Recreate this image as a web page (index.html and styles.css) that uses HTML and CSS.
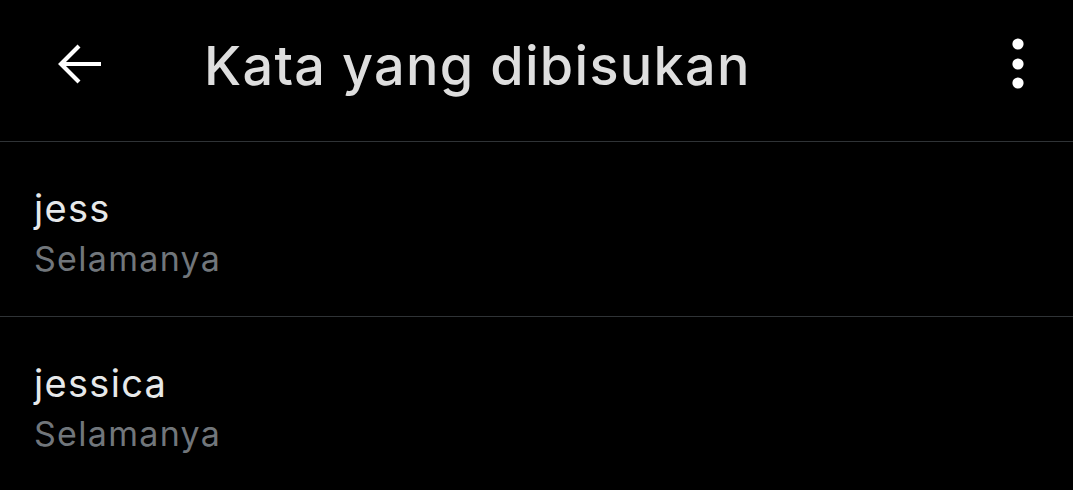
FILE: index.html
```html
<!DOCTYPE html>
<html lang="id">
<head>
    <meta charset="UTF-8">
    <meta name="viewport" content="width=device-width, initial-scale=1.0">
    <title>Kata yang dibisukan</title>
    <link rel="stylesheet" href="styles.css">
</head>
<body>

<header class="top-bar">
    <button class="icon-btn back-btn" aria-label="Kembali">
        <svg width="50" height="50" viewBox="0 0 50 50">
            <path d="M47 25H9M25 7L7 25l18 18" fill="none" stroke="#fff" stroke-width="4.2"/>
        </svg>
    </button>
    <h1 class="title">Kata yang dibisukan</h1>
    <button class="icon-btn more-btn" aria-label="Lainnya">
        <svg width="14" height="54" viewBox="0 0 14 54">
            <circle cx="7" cy="7" r="5.6" fill="#fff"/>
            <circle cx="7" cy="27" r="5.6" fill="#fff"/>
            <circle cx="7" cy="46" r="5.6" fill="#fff"/>
        </svg>
    </button>
</header>

<ul class="muted-list">
    <li class="muted-item">
        <span class="word">jess</span>
        <span class="duration">Selamanya</span>
    </li>
    <li class="muted-item">
        <span class="word">jessica</span>
        <span class="duration">Selamanya</span>
    </li>
</ul>

</body>
</html>
```

FILE: styles.css
```css
body {
    margin: 0;
    background: #000;
    color: #e7e9ea;
    font-family: Inter, "Noto Sans", Arial, sans-serif;
    overflow: hidden;
}

.top-bar {
    display: flex;
    align-items: center;
    height: 141px;
    border-bottom: 1px solid #2f3336;
}

.icon-btn {
    background: none;
    border: none;
    padding: 0;
    display: flex;
    align-items: center;
    justify-content: center;
}

.back-btn {
    margin-left: 54px;
    margin-top: -14px;
}

.title {
    flex: 1;
    margin: -10px 0 0 100px;
    font-size: 54px;
    font-weight: 500;
    letter-spacing: 1.3px;
    color: #dedede;
}

.more-btn {
    margin-right: 48px;
    margin-top: -14px;
}

.muted-list {
    list-style: none;
    margin: 0;
    padding: 0;
}

.muted-item {
    display: flex;
    flex-direction: column;
    justify-content: center;
    height: 174px;
    padding-left: 34px;
    border-bottom: 1px solid #2f3336;
}

.word {
    font-size: 38px;
    line-height: 50px;
    letter-spacing: 1.3px;
    color: #e7e9ea;
    margin-top: 10px;
}

.duration {
    font-size: 34px;
    line-height: 52px;
    letter-spacing: 1.3px;
    color: #71767b;
}
```
